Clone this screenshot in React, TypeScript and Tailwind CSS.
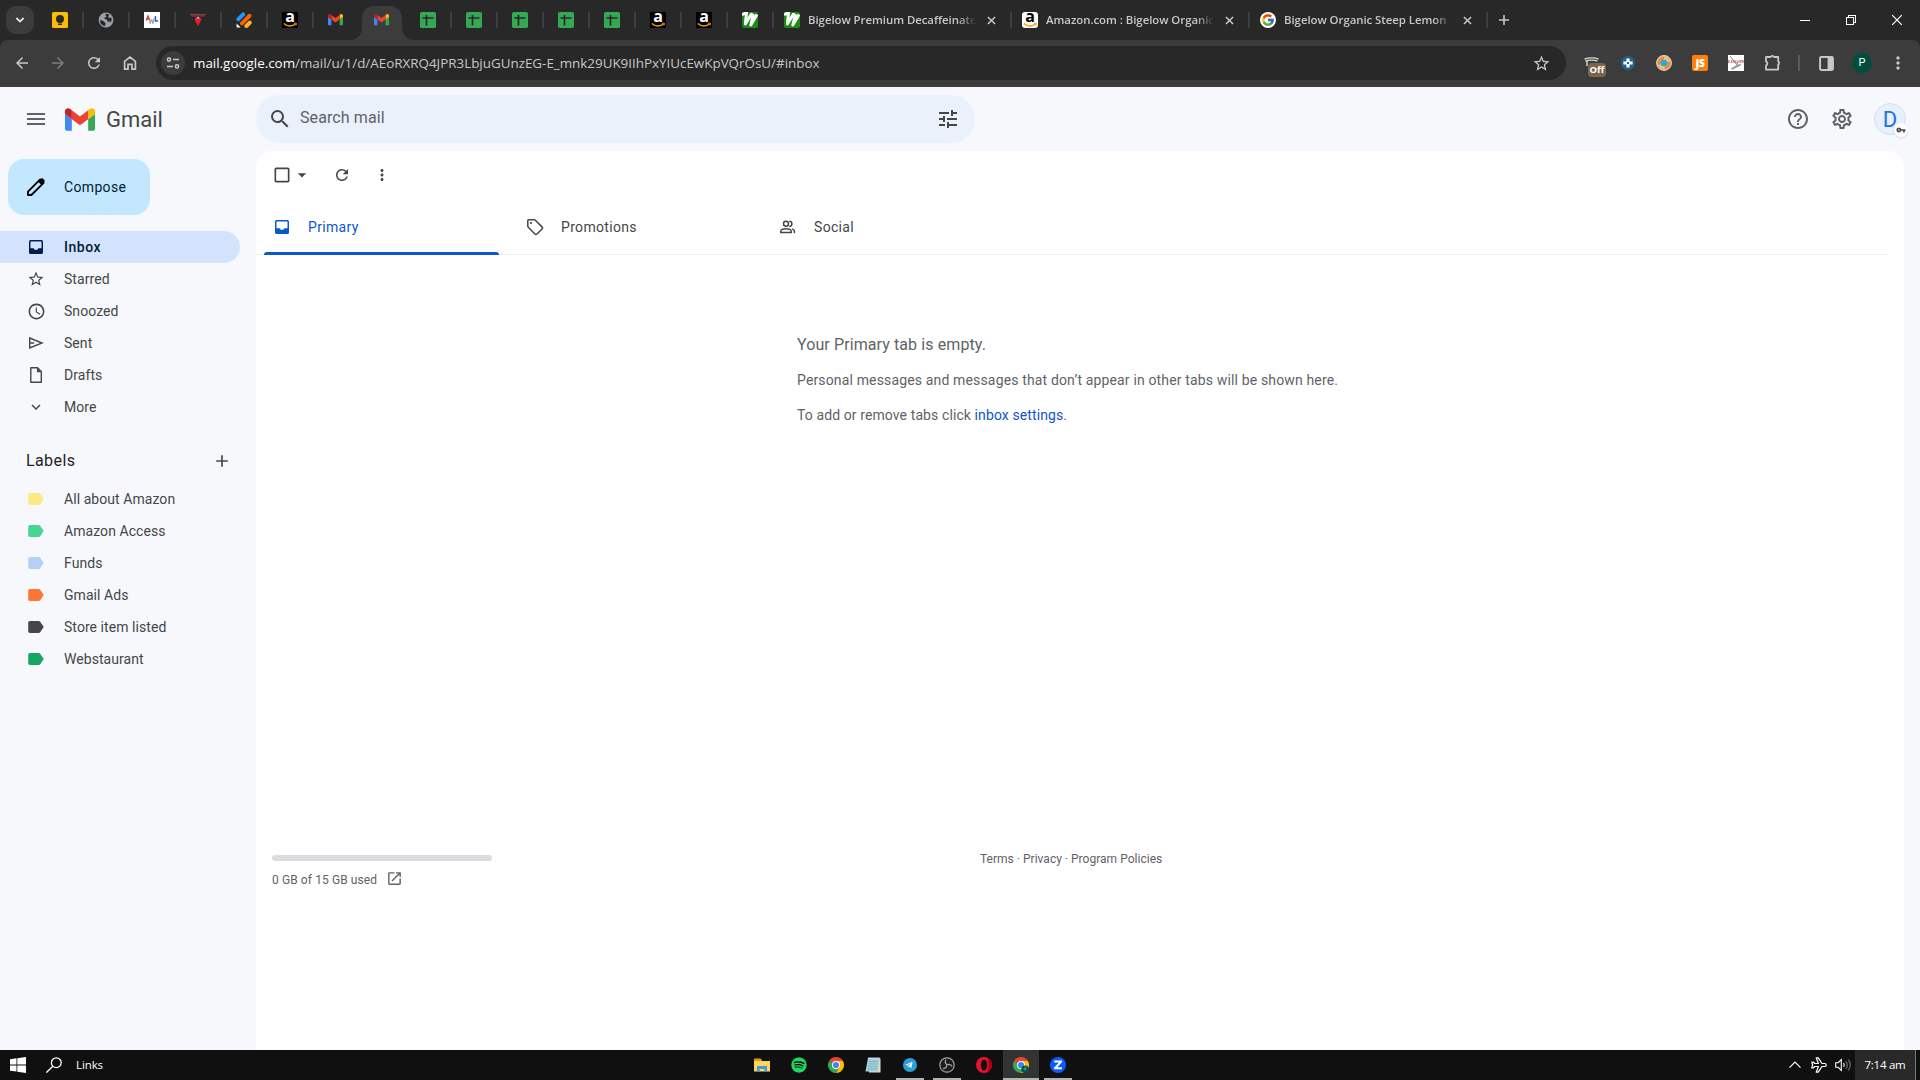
import React from "react";
import type { ReactNode } from "react";
import {
  MdAccessTime,
  MdAdd,
  MdArrowBack,
  MdArrowDropDown,
  MdArrowForward,
  MdCheckBoxOutlineBlank,
  MdExpandMore,
  MdHelpOutline,
  MdMenu,
  MdMoreVert,
  MdOpenInNew,
  MdOutlineSettings,
  MdRefresh,
  MdSearch,
  MdStarBorder,
  MdTune,
  MdVpnKey,
} from "react-icons/md";
import { FaSpotify, FaTelegramPlane } from "react-icons/fa";
import { FcGoogle } from "react-icons/fc";

/* ---------- favicons ---------- */

const GmailLogo = ({ className }: { className: string }) => (
  <svg viewBox="52 42 88 66" className={className}>
    <path fill="#4285f4" d="M58 108h14V74L52 59v43c0 3.32 2.69 6 6 6" />
    <path fill="#34a853" d="M120 108h14c3.32 0 6-2.69 6-6V59l-20 15" />
    <path fill="#fbbc04" d="M120 48v26l20-15v-8c0-7.42-8.47-11.65-14.4-7.2" />
    <path fill="#ea4335" d="M72 74V48l24 18 24-18v26L96 92" />
    <path fill="#c5221f" d="M52 51v8l20 15V48l-5.6-4.2c-5.94-4.45-14.4-.22-14.4 7.2" />
  </svg>
);

const Keep = () => (
  <svg viewBox="0 0 16 16" className="size-4">
    <rect width="16" height="16" rx="1.5" fill="#fbbc04" />
    <circle cx="8" cy="7" r="4" fill="#282828" />
    <path d="M6 9h4v1.6H6zM6 11.6h4V13H6z" fill="#282828" />
  </svg>
);

const Globe = () => (
  <svg viewBox="0 0 16 16" className="size-4">
    <circle cx="8" cy="8" r="7.4" fill="#9aa0a6" />
    <path
      d="M8.2 1.8c-1 .6-1 1.4-.2 1.9.9.6.4 1.5-.7 1.6-1.3.2-1.2 1.5-.2 1.8 1.300.3 2.200.6 2.300 1.800.1 1 1 1.100 1.800.8.9-.3 1.700.2 1.300 1.200a5.900 5.900 0 0 0 1-5.300L11.500 6c-1 0-1.400-.9-.9-1.700l.6-1.600a6 6 0 0 0-3-.9zM2 8.200c1.200.1 3.200.3 3.800 1.300.6 1.100 1.900 1.100 1.700 2.300l-.3 2.200A6 6 0 0 1 2 8.200z"
      fill="#282828"
    />
  </svg>
);

const Scribble = () => (
  <svg viewBox="0 0 16 16" className="size-4">
    <rect width="16" height="16" fill="#fff" />
    <path d="M2.200 8.600 4 4l1.800 4.600M3 7h2.400" stroke="#d63a3a" strokeWidth="1.300" fill="none" />
    <path d="m5.200 6.500 1 5 1.400-4 1.200 4 1-5" stroke="#888" strokeWidth=".9" fill="none" />
    <path d="M11.400 4v5H14" stroke="#2c62b8" strokeWidth="1.500" fill="none" />
  </svg>
);

const RedTriangle = () => (
  <svg viewBox="0 0 16 16" className="size-4">
    <path d="M0 2h16v1.800H0z" fill="#5a2430" />
    <path d="M.5 2.400h15M1.500 4h13" stroke="#a8564a" strokeWidth=".9" strokeDasharray="2 .6" />
    <path d="M2 5h12l-1.500 2.400h-9z" fill="#3d0b52" />
    <path d="M4 6.600h8L8 14z" fill="#f21b1b" />
    <path d="M5.500 6.600 8 4.800l2.500 1.800z" fill="#fff" opacity=".8" />
  </svg>
);

const Stripes = () => (
  <svg viewBox="0 0 16 16" className="size-4" strokeLinecap="round" fill="none">
    <path d="M2.400 7.200 7.200 2.400" stroke="#1a9cff" strokeWidth="4" />
    <path d="m6 11.400 7.400-7.600" stroke="#ff6100" strokeWidth="4" />
    <path d="m10.400 14 3.400-3.400" stroke="#ffb629" strokeWidth="4" />
    <path d="M.6 11.400v4h4z" fill="#fff" />
  </svg>
);

const Amazon = ({ light = false }: { light?: boolean }) => (
  <span className={`relative block size-4 ${light ? "rounded-[3px] bg-white text-black" : "bg-black text-white"}`}>
    <span className="absolute inset-x-0 -top-[4px] text-center font-['Open_Sans'] text-[16px] leading-[16px] font-bold">a</span>
    <svg viewBox="0 0 16 16" className="absolute inset-0 size-4">
      <path d="M1.800 11.400c3.600 3.400 8.600 3.200 11.600.6" stroke="#ff9900" strokeWidth="1.400" fill="none" />
      <path d="M12 11.200h2.400l-.4 2.400" stroke="#ff9900" strokeWidth="1" fill="none" />
    </svg>
  </span>
);

const Sheet = () => (
  <svg viewBox="0 0 16 16" className="size-4">
    <rect width="16" height="16" rx="1.800" fill="#34a853" />
    <path d="M2.500 6h11M6.500 3v10.500" stroke="#282828" strokeWidth="1.700" />
  </svg>
);

const Webstaurant = () => (
  <svg viewBox="0 0 16 16" className="size-4">
    <rect width="16" height="16" rx="2" fill="#1d8a10" />
    <path d="M0 2.500 4.500.8 3.400 12 9.300 2.300 11.200 3.300 8.800 13 15 2.500" stroke="#fff" strokeWidth="3" strokeLinejoin="round" fill="none" />
  </svg>
);

/* ---------- tab strip ---------- */

type Pinned = { icon: ReactNode; active?: boolean; noLine?: boolean };

const pinned: Pinned[] = [
  { icon: <Keep /> },
  { icon: <Globe /> },
  { icon: <Scribble /> },
  { icon: <RedTriangle /> },
  { icon: <Stripes /> },
  { icon: <Amazon /> },
  { icon: <GmailLogo className="mr-px w-[15px]" />, noLine: true },
  { icon: <GmailLogo className="mr-px w-[15px]" />, active: true, noLine: true },
  { icon: <Sheet /> },
  { icon: <Sheet /> },
  { icon: <Sheet /> },
  { icon: <Sheet /> },
  { icon: <Sheet /> },
  { icon: <Amazon /> },
  { icon: <Amazon /> },
  { icon: <Webstaurant /> },
];

const wide = [
  { icon: <Webstaurant />, title: "Bigelow Premium Decaffeinated" },
  { icon: <Amazon light />, title: "Amazon.com : Bigelow Organic" },
  { icon: <FcGoogle className="size-4 rounded-full bg-white p-px" />, title: "Bigelow Organic Steep Lemon" },
];

const Close = ({ className }: { className: string }) => (
  <svg viewBox="0 0 10 10" className={className} stroke="currentColor" fill="none">
    <path d="m1 1 8 8M9 1 1 9" />
  </svg>
);

const TabStrip = () => (
  <div className="flex h-10 items-stretch bg-[#282828]">
    <div className="flex w-[37px] items-center pl-1.5">
      <div className="flex size-7 items-center justify-center rounded-[10px] bg-[#3c3c3c] text-gray-200">
        <svg viewBox="0 0 10 10" className="size-2.5" fill="none" stroke="currentColor" strokeWidth="1.800">
          <path d="m1.400 3 3.600 3.600L8.600 3" />
        </svg>
      </div>
    </div>
    {pinned.map((t, i) => (
      <div key={i} className="relative flex w-[46px] shrink-0 items-center justify-center">
        {t.active && (
          <svg viewBox="0 0 64 34" className="absolute top-1.5 -left-[9px] h-[34px] w-16">
            <path d="M0 34a12 12 0 0 0 12-12V12A12 12 0 0 1 24 0h16a12 12 0 0 1 12 12v10a12 12 0 0 0 12 12z" fill="#3c3c3c" />
          </svg>
        )}
        <span className="relative">{t.icon}</span>
        {!t.noLine && <span className="absolute top-3 -right-px h-4 w-0.5 bg-[#3f3f3f]" />}
      </div>
    ))}
    {wide.map((t) => (
      <div key={t.title} className="relative flex w-[238px] shrink-0 items-center pl-[11px]">
        {t.icon}
        <span className="ml-2 w-[168px] overflow-hidden [mask-image:linear-gradient(to_right,black_150px,transparent_168px)] font-['Open_Sans'] text-[11.4px] font-semibold tracking-[-0.04px] whitespace-nowrap text-[#c7c7c7]">
          {t.title}
        </span>
        <Close className="ml-[11px] size-[9px] stroke-[1.5] text-[#d0d0d0]" />
        <span className="absolute top-3 -right-px h-4 w-0.5 bg-[#3f3f3f]" />
      </div>
    ))}
    <div className="flex w-[34px] items-center justify-center text-[#c7c7c7]">
      <svg viewBox="0 0 10 10" className="size-2.5" stroke="currentColor" strokeWidth="1.600">
        <path d="M5 0v10M0 5h10" />
      </svg>
    </div>
    <div className="ml-auto flex text-white">
      <div className="flex w-[46px] items-center justify-center">
        <span className="h-px w-2.5 bg-white" />
      </div>
      <div className="flex w-[46px] items-center justify-center">
        <svg viewBox="0 0 10 10" className="size-2.5" fill="none" stroke="currentColor" shapeRendering="crispEdges">
          <path d="M.5 2.500h7v7h-7zM2.500 2.500v-2h7v7h-2" />
        </svg>
      </div>
      <div className="flex w-[46px] items-center justify-center">
        <Close className="mr-px size-3" />
      </div>
    </div>
  </div>
);

/* ---------- toolbar ---------- */

const Ext = ({ children }: { children: ReactNode }) => (
  <div className="flex w-9 shrink-0 items-center justify-center">{children}</div>
);

const Toolbar = () => (
  <div className="bg-[#282828]">
    <div className="flex h-[47px] items-start rounded-t-lg bg-[#3c3c3c] pt-1.5 text-[#c7c7c7]">
      <div className="flex h-[34px] w-[156px] items-center pl-1">
        <Ext><MdArrowBack className="size-[18px]" /></Ext>
        <Ext><MdArrowForward className="size-[18px] text-[#7d7d7d]" /></Ext>
        <Ext><MdRefresh className="size-[18px]" /></Ext>
        <Ext>
          <svg viewBox="0 0 16 16" className="size-4" fill="none" stroke="currentColor" strokeWidth="1.700">
            <path d="M2.600 6.400 8 2l5.400 4.400V14.200H10V9.400H6v4.800H2.600z" />
          </svg>
        </Ext>
      </div>
      <div className="flex h-[34px] w-[1410px] items-center rounded-full bg-[#282828] pr-[15px] pl-[5px]">
        <div className="flex size-6 items-center justify-center rounded-full bg-[#3c3c3c]">
          <svg viewBox="0 0 14 14" className="size-3.5" fill="none" stroke="currentColor" strokeWidth="1.500">
            <circle cx="3" cy="3.600" r="1.600" />
            <path d="M7 3.600h6M1 10.400h6" />
            <circle cx="11" cy="10.400" r="1.600" />
          </svg>
        </div>
        <div className="ml-2 font-['Open_Sans'] text-[13.4px] whitespace-nowrap text-[#c7c7c7]">
          <span className="text-white">mail.google.com</span>/mail/u/1/d/AEoRXRQ4JPR3LbjuGUnzEG-E_mnk29UK9IIhPxYIUcEwKpVQrOsU/#inbox
        </div>
        <MdStarBorder className="ml-auto size-[19px]" />
      </div>
      <div className="flex h-[34px] items-center pl-2">
        <Ext>
          <span className="relative block h-4 w-4">
            <svg viewBox="0 0 16 16" className="size-4" fill="none" stroke="#d8d8d8" strokeWidth="1.400">
              <path d="M.5 4.200C4 2.400 11 2.400 14.500 4.200M1.400 6.200c3-1.400 9-1.400 12 0M3 6v5" />
            </svg>
            <span className="absolute top-2 left-1 flex h-3.5 w-[18px] items-center justify-center rounded bg-[#7e654a] font-['Open_Sans'] text-[9.5px] font-bold text-white">
              Off
            </span>
          </span>
        </Ext>
        <Ext>
          <svg viewBox="0 0 14 14" className="size-3.5">
            <circle cx="7" cy="7" r="7" fill="#21618f" />
            <path d="M5.400 2.400h3.200v3h3v3.200h-3v3H5.400v-3h-3V5.400h3z" fill="#fff" />
            <path d="M6 6h2v2H6z" fill="#21618f" />
          </svg>
        </Ext>
        <Ext>
          <svg viewBox="0 0 16 16" className="size-4">
            <circle cx="8" cy="8" r="7.400" fill="#f08a3c" stroke="#d9d3cd" strokeWidth="1.100" />
            <path d="M8 1.600a6.400 6.400 0 0 1 6.200 5L8 8zM2 10a6.400 6.400 0 0 0 7 4.300L8 8z" fill="#f9b878" />
            <circle cx="8" cy="8" r="3.300" fill="#18b0e8" />
          </svg>
        </Ext>
        <Ext>
          <span className="flex size-4 items-center justify-center rounded-xs bg-[#ff7f0a] font-['Open_Sans'] text-[11px] font-extrabold tracking-tighter text-white">
            JS
          </span>
        </Ext>
        <Ext>
          <span className="relative block size-4 bg-white">
            <svg viewBox="0 0 16 16" className="size-4" stroke="#8b8b8b" fill="none">
              <path d="m2 1 8 10" />
              <path d="m3.500 14 9-4.500" strokeWidth="1.800" />
              <path d="m8 10.500 3-5" />
            </svg>
            <span className="absolute inset-x-0 top-[4px] text-center font-['Liberation_Serif'] text-[4.5px] leading-[6px] font-bold whitespace-nowrap text-[#b0252c]">LOG IN</span>
          </span>
        </Ext>
        <Ext>
          <svg viewBox="0 0 18 18" className="ml-0.5 size-[18px]" fill="none" stroke="currentColor" strokeWidth="1.800" strokeLinejoin="round">
            <path d="M2 3h4.600a1.800 1.600 0 0 1 3.400 0h4.200v4.400a1.600 1.800 0 0 1 0 3.200v5H2v-4a2.300 2.300 0 0 0 0-4.200z" />
          </svg>
        </Ext>
        <div className="flex w-[18px] items-center justify-center">
          <span className="h-4 w-0.5 bg-[#5c5c5c]" />
        </div>
        <Ext>
          <svg viewBox="0 0 14 14" className="size-[15px]">
            <rect x="1" y="1" width="12" height="12" rx="1" fill="none" stroke="#c7c7c7" strokeWidth="1.800" />
            <path d="M8 1h5v12H8z" fill="#c7c7c7" />
          </svg>
        </Ext>
        <Ext>
          <span className="flex size-5 items-center justify-center rounded-full bg-[#004d40] font-['Roboto'] text-[11px] text-white">P</span>
        </Ext>
        <Ext><MdMoreVert className="size-5" /></Ext>
      </div>
    </div>
  </div>
);

/* ---------- Gmail ---------- */

const GmailHeader = () => (
  <header className="flex h-16 items-center">
    <MdMenu className="ml-6 size-6 text-[#5f6368]" />
    <GmailLogo className="ml-[17px] h-[23px] w-[30px]" />
    <span className="ml-[11px] w-[150px] text-[22px] text-[#444746]">Gmail</span>
    <div className="flex h-12 w-[719px] items-center rounded-full bg-[#eaf1fb] pr-[15px] pl-3">
      <MdSearch className="size-6 text-[#444746]" />
      <span className="-mt-0.5 ml-2 tracking-[0.1px] text-[#5f6368]">Search mail</span>
      <MdTune className="ml-auto size-6 text-[#444746]" />
    </div>
    <div className="ml-auto flex items-center pr-3.5 text-[#5f6368]">
      <MdHelpOutline className="size-6" />
      <MdOutlineSettings className="ml-5 size-6" />
      <div className="relative ml-5 flex size-8 items-center justify-center rounded-full border border-[#d3e0f7] bg-[#e8f0fe] text-[22px] text-[#1a73e8]">
        D
        <span className="absolute -right-[3px] -bottom-[3px] flex size-3.5 items-center justify-center rounded-full bg-white shadow">
          <MdVpnKey className="size-2.5 text-[#444746]" />
        </span>
      </div>
    </div>
  </header>
);

const InboxIcon = () => (
  <svg viewBox="0 0 14 14" className="size-3.5">
    <path
      d="M1.500 0h11A1.500 1.500 0 0 1 14 1.500v11a1.500 1.500 0 0 1-1.500 1.500h-11A1.500 1.500 0 0 1 0 12.500v-11A1.500 1.500 0 0 1 1.500 0zM1.500 1.500v6.700h3.200a2.400 2.400 0 0 0 4.600 0h3.200V1.500z"
      fill="currentColor"
      fillRule="evenodd"
    />
  </svg>
);

const SendIcon = () => (
  <svg viewBox="0 0 16 16" className="size-4" fill="none" stroke="currentColor" strokeWidth="1.400">
    <path d="M1.700 3 14 8 1.700 13zM1.700 8h4.500" />
  </svg>
);

const DraftIcon = () => (
  <svg viewBox="0 0 16 16" className="size-4">
    <path d="M2.800.8h6.700l3.800 3.800v10.600H2.800z" fill="none" stroke="currentColor" strokeWidth="1.400" strokeLinejoin="round" />
    <path d="M9 .8v4.400h4.300z" fill="currentColor" />
  </svg>
);

const folders: { name: string; icon: ReactNode }[] = [
  { name: "Starred", icon: <MdStarBorder className="size-[18px]" /> },
  { name: "Snoozed", icon: <MdAccessTime className="size-[19px]" /> },
  { name: "Sent", icon: <SendIcon /> },
  { name: "Drafts", icon: <DraftIcon /> },
  { name: "More", icon: <MdExpandMore className="size-[18px]" /> },
];

const labels = [
  { name: "All about Amazon", color: "text-[#fbe983]" },
  { name: "Amazon Access", color: "text-[#44d692]" },
  { name: "Funds", color: "text-[#b6cff5]" },
  { name: "Gmail Ads", color: "text-[#ff7537]" },
  { name: "Store item listed", color: "text-[#464646]" },
  { name: "Webstaurant", color: "text-[#16a765]" },
];

const Row = ({ icon, name }: { icon: ReactNode; name: string }) => (
  <div className="flex h-8 items-center pl-[26px] text-[#444746]">
    <span className="flex w-5 justify-center">{icon}</span>
    <span className="ml-[18px] tracking-[0.06px]">{name}</span>
  </div>
);

const Sidebar = () => (
  <nav className="w-64 shrink-0 pt-2 text-sm">
    <div className="ml-2 flex h-14 w-[142px] items-center rounded-2xl bg-[#c2e7ff] pl-[18px] text-[#001d35]">
      <svg viewBox="0 0 20 20" className="size-5" fill="none">
        <path d="M2 18v-3.400L14.200 2.400l3.400 3.400L5.400 18z" stroke="#000" strokeWidth="1.900" strokeLinejoin="round" />
        <path d="m12 4.600 3-2.900c.6-.6 1.500-.6 2.100 0l1.200 1.200c.6.6.6 1.500 0 2.100l-2.900 3z" fill="#000" />
      </svg>
      <span className="ml-[18px] tracking-[0.34px]">Compose</span>
    </div>
    <div className="mt-4 flex h-8 w-60 items-center rounded-r-full bg-[#d3e3fd] pl-[26px] text-[#001d35]">
      <span className="flex w-5 justify-center text-[#041e49]"><InboxIcon /></span>
      <span className="ml-[18px] font-medium tracking-[0.5px]">Inbox</span>
    </div>
    {folders.map((f) => (
      <Row key={f.name} {...f} />
    ))}
    <div className="mt-[17px] mb-[2px] flex h-[41px] items-center pr-6 pl-[26px]">
      <span className="text-base tracking-[0.4px] text-[#1f1f1f]">Labels</span>
      <MdAdd className="ml-auto size-5 text-[#444746]" />
    </div>
    {labels.map((l) => (
      <Row
        key={l.name}
        name={l.name}
        icon={
          <svg viewBox="0 0 16 12" className={`h-3 w-4 ${l.color}`} fill="currentColor">
            <path d="M2 0h8.600c.6 0 1.200.3 1.600.8L15.700 6l-3.500 5.200c-.4.5-1 .8-1.600.8H2a1.800 1.800 0 0 1-1.800-1.800V1.800A1.800 1.800 0 0 1 2 0" />
          </svg>
        }
      />
    ))}
  </nav>
);

const TagIcon = () => (
  <svg viewBox="0 0 18 18" className="size-[18px]">
    <path
      d="M1.800 2.600v5.600c0 .4.2.8.5 1.100l6.600 6.700c.6.6 1.500.6 2.100 0l5-5c.6-.6.6-1.500 0-2.100L9.300 2.300a1.500 1.500 0 0 0-1.100-.5H2.600a.8.8 0 0 0-.8.8z"
      fill="none"
      stroke="currentColor"
      strokeWidth="1.500"
    />
    <circle cx="5" cy="5" r="1.100" fill="currentColor" />
  </svg>
);

const PeopleIcon = () => (
  <svg viewBox="0 0 16 14" className="h-3.5 w-4" fill="none" stroke="currentColor" strokeWidth="1.500">
    <circle cx="6" cy="3.800" r="2.500" />
    <path d="M.8 12.500v-1.300C.8 9.500 4 8.700 6 8.700s5.200.8 5.200 2.500v1.300z" />
    <path d="M9.300 1.200a2.600 2.600 0 0 1 0 5.200M12 8.900c1.300.5 2.400 1.200 2.400 2.300v2" />
  </svg>
);

const tabs: { name: string; icon: ReactNode; active?: boolean }[] = [
  { name: "Primary", icon: <InboxIcon />, active: true },
  { name: "Promotions", icon: <TagIcon /> },
  { name: "Social", icon: <PeopleIcon /> },
];

const Main = () => (
  <main className="flex w-[1648px] flex-col rounded-t-2xl bg-white">
    <div className="flex h-12 items-center pl-4 text-[#444746]">
      <MdCheckBoxOutlineBlank className="size-5" />
      <MdArrowDropDown className="size-5" />
      <MdRefresh className="ml-[21px] size-[18px]" />
      <MdMoreVert className="ml-[22px] size-[18px]" />
    </div>
    <div className="mr-4 flex h-14 border-b border-[#eceff1] pl-2 text-sm">
      {tabs.map((t) => (
        <div
          key={t.name}
          className={`relative flex w-[253px] items-center pl-2 ${t.active ? "text-[#0b57d0]" : "text-[#444746]"}`}
        >
          <span className="flex w-5 justify-center">{t.icon}</span>
          <span className="ml-4 tracking-[0.33px]">{t.name}</span>
          {t.active && <span className="absolute -bottom-px left-0 h-[3px] w-[235px] rounded-t bg-[#0b57d0]" />}
        </div>
      ))}
    </div>
    <div className="mt-[74px] ml-[541px] h-[512px] text-sm text-[#5f6368]">
      <p className="h-[35px] text-base leading-8 tracking-[0.1px]">Your Primary tab is empty.</p>
      <p className="h-[35px] leading-8 tracking-[0.15px]">
        Personal messages and messages that don’t appear in other tabs will be shown here.
      </p>
      <p className="leading-8 tracking-[0.1px]">
        To add or remove tabs click <span className="text-[#1155cc]">inbox settings</span>.
      </p>
    </div>
    <footer className="flex pt-3.5 pl-4 text-xs text-[#5f6368]">
      <div className="w-[708px]">
        <div className="h-1.5 w-[220px] rounded-full bg-[#dadce0]" />
        <div className="mt-2.5 flex items-center">
          <span className="tracking-[0.1px]">0 GB of 15 GB used</span>
          <MdOpenInNew className="ml-[9px] size-[17px] -translate-y-px" />
        </div>
      </div>
      <div className="-mt-1 tracking-[0.02px]">Terms · Privacy · Program Policies</div>
    </footer>
  </main>
);

/* ---------- taskbar ---------- */

const Chrome = ({ badge = false }: { badge?: boolean }) => (
  <svg viewBox="0 0 16 16" className="size-4">
    <path d="M8 8 1.070 4A8 8 0 0 1 14.930 4z" fill="#ea4335" />
    <path d="M8 8 1.070 4A8 8 0 0 0 8 16l3.460-6z" fill="#34a853" />
    <path d="M8 4h6.930A8 8 0 0 1 8 16l3.460-6z" fill="#fbbc04" />
    <circle cx="8" cy="8" r="4" fill="#fff" />
    <circle cx="8" cy="8" r="3.100" fill="#4285f4" />
    {badge && <circle cx="12" cy="12.200" r="3.700" fill="#00574a" />}
    {badge && <circle cx="12" cy="11.700" r="1" fill="none" stroke="#7fb8ae" strokeWidth=".7" />}
  </svg>
);

const apps: { icon: ReactNode; open?: boolean; active?: boolean }[] = [
  {
    icon: (
      <svg viewBox="0 0 16 16" className="size-4">
        <path d="M0 1.500h6.500L8 3.200V6H0z" fill="#e0a010" />
        <path d="M0 4h16v10.500H0z" fill="#ffd75e" />
        <path d="M3 14.500V9h10v5.500h-2.600v-2.600H5.600v2.600z" fill="#3f9be0" />
      </svg>
    ),
  },
  { icon: <FaSpotify className="size-4 rounded-full bg-[#111] text-[#1ed760]" /> },
  { icon: <Chrome /> },
  {
    icon: (
      <svg viewBox="0 0 16 16" className="size-4">
        <path d="M4 1.500h11.500V15.500H4z" fill="#e5dcb8" />
        <path d="M3 1h11.500L13 14.500H.5z" fill="#9fd0dc" />
        <path d="M4 4.500h9M3.600 7h9M3.200 9.500h9M2.800 12h9" stroke="#6ba9bb" strokeWidth=".7" />
        <path d="M3.500 1.200h11" stroke="#e8f4f7" strokeWidth="1.800" strokeDasharray="1 1" />
      </svg>
    ),
  },
  {
    icon: (
      <span className="flex size-3.5 items-center justify-center rounded-full bg-[#2a9fd8] text-white">
        <FaTelegramPlane className="mr-px size-2" />
      </span>
    ),
    open: true,
  },
  {
    icon: (
      <svg viewBox="0 0 16 16" className="size-4" fill="none" stroke="#a3a3a8">
        <circle cx="8" cy="8" r="7.200" fill="#1c1c1f" strokeWidth="1.200" />
        <path d="M8 7.600C6 6.400 5.800 4.300 7 2.900M8.300 7.900c2-1.100 4-.2 4.600 1.600M7.800 8.300c0 2.300-1.800 3.500-3.700 3.100" strokeWidth="1.300" />
      </svg>
    ),
    open: true,
  },
  {
    icon: (
      <svg viewBox="0 0 16 16" className="size-4">
        <circle cx="8" cy="8" r="8" fill="#e8132b" />
        <path d="M11 .6a8 8 0 0 1 0 14.800C13 12 13 4 11 .6" fill="#a70014" />
        <ellipse cx="8" cy="8" rx="3.100" ry="5.500" fill="#111" />
      </svg>
    ),
  },
  { icon: <Chrome badge />, open: true, active: true },
  {
    icon: (
      <svg viewBox="0 0 16 16" className="size-4">
        <circle cx="8" cy="8" r="8" fill="#0b5cff" />
        <path d="M4.300 4.600h6.900L4.900 11.300h7" stroke="#fff" strokeWidth="2" fill="none" strokeLinejoin="round" />
      </svg>
    ),
    open: true,
  },
];

const Taskbar = () => (
  <div className="flex h-[30px] items-stretch bg-[#101010] font-['Open_Sans'] text-white">
    <div className="flex w-[743px] items-center pl-2.5">
      <svg viewBox="0 0 16 16" className="size-4" fill="#fff">
        <path d="M0 2.200 6.500 1.300V7.500H0zM7.300 1.200 16 0v7.500H7.300zM0 8.400h6.500v6.200L0 13.700zM7.300 8.400H16V16l-8.700-1.200z" />
      </svg>
      <svg viewBox="0 0 16 16" className="ml-5 size-4" fill="none" stroke="#fff" strokeWidth="1.300">
        <circle cx="10.300" cy="5.700" r="4.900" />
        <path d="M6.800 9.200.4 15.600" />
      </svg>
      <span className="ml-3.5 text-[11.5px] tracking-[-0.1px]">Links</span>
    </div>
    {apps.map((a, i) => (
      <div key={i} className="relative flex w-[37px] items-center justify-center">
        {a.active && <span className="absolute inset-y-0 left-px w-9 bg-[#333]" />}
        <span className="relative">{a.icon}</span>
        {a.open && (
          <span className={`absolute bottom-0 h-0.5 bg-[#b5b3ae] ${a.active ? "left-px w-9" : "left-[5px] w-7"}`} />
        )}
      </div>
    ))}
    <div className="ml-auto flex items-center">
      <svg viewBox="0 0 12 8" className="h-2 w-3" fill="none" stroke="#fff" strokeWidth="1.200">
        <path d="m.5 6.700 5.500-5.500 5.500 5.500" />
      </svg>
      <svg viewBox="0 0 16 16" className="ml-2.5 size-4" fill="none" stroke="#fff" strokeWidth="1.200" strokeLinejoin="round">
        <path d="M.8 5h1.500l1.500 1.500h3.600L5.200.8h2L11 6.500h2.800c1.900 0 1.900 3 0 3H11l-3.800 5.700h-2l2.200-5.700H3.800L2.300 11H.8L1.600 8z" />
      </svg>
      <svg viewBox="0 0 17 14" className="ml-2 h-3.5 w-[17px]" fill="none" stroke="#fff" strokeWidth="1.100">
        <path d="M.7 4.700h2.500L6.300 1.600v10.800L3.200 9.300H.7z" />
        <path d="M8.600 5c.8 1.200.8 2.800 0 4" />
        <path d="M10.800 3.300c1.800 2.200 1.800 5.200 0 7.400M13.200 1.700c2.800 3.100 2.800 7.500 0 10.600" stroke="#777" />
      </svg>
      <div className="ml-[3px] flex h-[30px] w-[61px] items-center justify-center border-r border-[#777] bg-[#292929] text-[11.5px] tracking-[-0.25px]">
        7:14 am
      </div>
      <div className="w-1" />
    </div>
  </div>
);

export default function App() {
  return (
    <div className="flex h-[1080px] w-[1920px] flex-col overflow-hidden bg-[#f6f8fc] font-['Roboto',sans-serif]">
      <TabStrip />
      <Toolbar />
      <GmailHeader />
      <div className="flex min-h-0 flex-1">
        <Sidebar />
        <Main />
      </div>
      <Taskbar />
    </div>
  );
}
